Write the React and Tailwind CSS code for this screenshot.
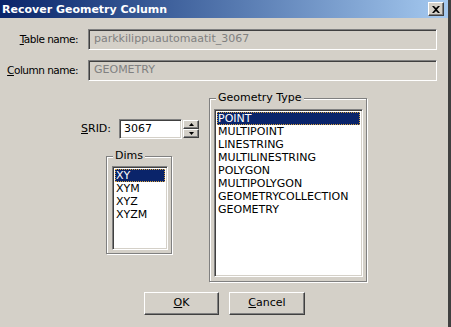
import React from 'react';

const font = { fontFamily: 'Tahoma, "DejaVu Sans", "Liberation Sans", sans-serif' };

const sunken =
  'border border-t-[#808080] border-l-[#808080] border-b-white border-r-white shadow-[inset_1px_1px_0_#404040,inset_-1px_-1px_0_#d4d0c8]';
const raised =
  'border border-t-white border-l-white border-b-[#404040] border-r-[#404040] shadow-[inset_-1px_-1px_0_#808080]';

function Field({ value }) {
  return (
    <div className={`h-[21px] w-[349px] ${sunken} bg-[#d4d0c8] flex items-center pl-[5px] text-[#808080]`}>
      {value}
    </div>
  );
}

function GroupBox({ title, className, children }) {
  return (
    <div className={`relative border border-[#808080] shadow-[1px_1px_0_#fff,inset_1px_1px_0_#fff] ${className}`}>
      <span className="absolute -top-[8px] left-[6px] bg-[#d4d0c8] px-[2px] leading-[13px]">{title}</span>
      {children}
    </div>
  );
}

function ListBox({ items, className }) {
  return (
    <div className={`bg-white ${sunken} p-[2px] ${className}`}>
      {items.map((it, i) => (
        <div
          key={it}
          className={`h-[13px] leading-[13px] pl-[1px] whitespace-nowrap ${
            i === 0 ? 'bg-[#0a246a] text-white outline-1 outline-dotted outline-[#d4a040] -outline-offset-1' : 'text-black'
          }`}
        >
          {it}
        </div>
      ))}
    </div>
  );
}

export default function App() {
  return (
    <div style={font} className="w-[451px] h-[327px] bg-[#d4d0c8] text-[11px] text-black border-r-[3px] border-r-[#404040] overflow-hidden">
      <div className="h-[18px] bg-gradient-to-r from-[#0a246a] to-[#a6caf0] flex items-center pl-[2px] pr-[4px]">
        <span className="text-white font-bold text-[11px] leading-none">Recover Geometry Column</span>
        <div className={`ml-auto w-[16px] h-[14px] bg-[#d4d0c8] ${raised} flex items-center justify-center`}>
          <svg width="8" height="7" viewBox="0 0 8 7">
            <path d="M0 0h2l2 2 2-2h2L5 3.5 8 7H6L4 5 2 7H0l3-3.5z" fill="#000" />
          </svg>
        </div>
      </div>

      <div className="flex items-center mt-[11px]">
        <span className="w-[78px] text-right whitespace-nowrap text-[10.5px] tracking-[-0.5px]">
          <u>T</u>able name:
        </span>
        <div className="ml-[10px]">
          <Field value="parkkilippuautomaatit_3067" />
        </div>
      </div>
      <div className="flex items-center mt-[10px]">
        <span className="w-[78px] text-right whitespace-nowrap text-[10.5px] tracking-[-0.5px]">
          <u>C</u>olumn name:
        </span>
        <div className="ml-[10px]">
          <Field value="GEOMETRY" />
        </div>
      </div>

      <div className="flex mt-[17px]">
        <div className="w-[209px] flex flex-col">
          <div className="flex items-center mt-[21px] ml-[81px]">
            <span className="w-[38px]">
              <u>S</u>RID:
            </span>
            <div className={`w-[63px] h-[20px] bg-white ${sunken} flex items-center pl-[4px]`}>3067</div>
            <div className="flex flex-col ml-[1px]">
              <div className={`w-[16px] h-[9px] bg-[#d4d0c8] ${raised} flex items-center justify-center`}>
                <svg width="5" height="3" viewBox="0 0 5 3"><path d="M2.5 0L5 3H0z" fill="#000" /></svg>
              </div>
              <div className={`w-[16px] h-[9px] bg-[#d4d0c8] ${raised} flex items-center justify-center`}>
                <svg width="5" height="3" viewBox="0 0 5 3"><path d="M0 0h5L2.5 3z" fill="#000" /></svg>
              </div>
            </div>
          </div>
          <GroupBox title="Dims" className="ml-[106px] mt-[17px] w-[66px] h-[98px] pt-[9px] pl-[5px]">
            <ListBox items={['XY', 'XYM', 'XYZ', 'XYZM']} className="w-[56px] h-[84px]" />
          </GroupBox>
        </div>
        <GroupBox title="Geometry Type" className="w-[158px] h-[184px] pt-[10px] pl-[4px]">
          <ListBox
            items={[
              'POINT',
              'MULTIPOINT',
              'LINESTRING',
              'MULTILINESTRING',
              'POLYGON',
              'MULTIPOLYGON',
              'GEOMETRYCOLLECTION',
              'GEOMETRY',
            ]}
            className="w-[149px] h-[168px]"
          />
        </GroupBox>
      </div>

      <div className="flex mt-[10px] ml-[144px] gap-[10px]">
        <button className={`w-[75px] h-[23px] bg-[#d4d0c8] ${raised}`}>
          <u>O</u>K
        </button>
        <button className={`w-[76px] h-[23px] bg-[#d4d0c8] ${raised}`}>
          <u>C</u>ancel
        </button>
      </div>
    </div>
  );
}
